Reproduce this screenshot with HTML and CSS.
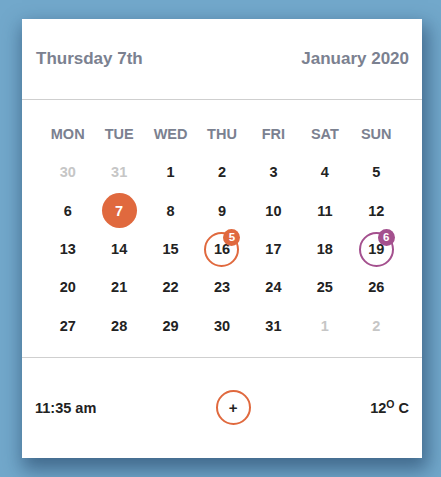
FILE: index.html
```html
<!DOCTYPE html>
<html>
<head>
<meta charset="utf-8">
<link rel="stylesheet" href="styles.css">
</head>
<body>
<div class="card">
  <header class="head">
    <span>Thursday 7th</span>
    <span>January 2020</span>
  </header>
  <section class="cal">
    <div class="wd">MON</div><div class="wd">TUE</div><div class="wd">WED</div><div class="wd">THU</div><div class="wd">FRI</div><div class="wd">SAT</div><div class="wd">SUN</div>
    <div class="d muted">30</div><div class="d muted">31</div><div class="d">1</div><div class="d">2</div><div class="d">3</div><div class="d">4</div><div class="d">5</div>
    <div class="d">6</div><div class="d"><span class="ring today">7</span></div><div class="d">8</div><div class="d">9</div><div class="d">10</div><div class="d">11</div><div class="d">12</div>
    <div class="d">13</div><div class="d">14</div><div class="d">15</div><div class="d"><span class="ring ev-orange">16<b class="badge">5</b></span></div><div class="d">17</div><div class="d">18</div><div class="d"><span class="ring ev-purple">19<b class="badge">6</b></span></div>
    <div class="d">20</div><div class="d">21</div><div class="d">22</div><div class="d">23</div><div class="d">24</div><div class="d">25</div><div class="d">26</div>
    <div class="d">27</div><div class="d">28</div><div class="d">29</div><div class="d">30</div><div class="d">31</div><div class="d muted">1</div><div class="d muted">2</div>
  </section>
  <footer class="foot">
    <span>11:35 am</span>
    <span class="add">+</span>
    <span>12<sup class="deg">O</sup> C</span>
  </footer>
</div>
</body>
</html>
```

FILE: styles.css
```css
html, body {
  margin: 0;
  padding: 0;
}
body {
  width: 441px;
  height: 477px;
  background: #72a8cb;
  font-family: "Liberation Sans", Arial, sans-serif;
  padding: 19px 0 0 22px;
  box-sizing: border-box;
  overflow: hidden;
}
.card {
  width: 400px;
  height: 439px;
  background: #fff;
  box-shadow: 3px 9px 18px 3px rgba(25, 55, 90, 0.55);
  display: flex;
  flex-direction: column;
}
.head {
  height: 80px;
  border-bottom: 1px solid #cfcfcf;
  display: flex;
  align-items: center;
  justify-content: space-between;
  padding: 0 13px 0 14px;
  font-size: 17px;
  font-weight: bold;
  color: #7b8190;
}
.cal {
  padding: 15px 20px 12px;
  display: grid;
  grid-template-columns: repeat(7, 1fr);
  grid-auto-rows: 38.33px;
  border-bottom: 1px solid #cfcfcf;
}
.wd {
  display: flex;
  align-items: center;
  justify-content: center;
  font-size: 14.5px;
  font-weight: bold;
  color: #7b8190;
}
.d {
  display: flex;
  align-items: center;
  justify-content: center;
  font-size: 14.5px;
  font-weight: bold;
  color: #222;
}
.d.muted {
  color: #c6c6c6;
}
.ring {
  position: relative;
  width: 35px;
  height: 35px;
  box-sizing: border-box;
  border-radius: 50%;
  display: flex;
  align-items: center;
  justify-content: center;
}
.today {
  background: #e0693e;
  color: #fff;
}
.ev-orange {
  border: 2px solid #e0693e;
}
.ev-purple {
  border: 2px solid #a4508e;
}
.badge {
  position: absolute;
  top: -5px;
  right: -3px;
  width: 17px;
  height: 17px;
  border-radius: 50%;
  color: #fff;
  font-size: 11.5px;
  display: flex;
  align-items: center;
  justify-content: center;
}
.ev-orange .badge {
  background: #e0693e;
}
.ev-purple .badge {
  background: #a4508e;
}
.foot {
  flex: 1;
  display: flex;
  align-items: center;
  justify-content: space-between;
  padding: 0 13px;
  font-size: 14.5px;
  font-weight: bold;
  color: #222;
}
.add {
  width: 35px;
  height: 35px;
  box-sizing: border-box;
  border: 2px solid #e0693e;
  border-radius: 50%;
  display: flex;
  align-items: center;
  justify-content: center;
  font-size: 15px;
}
.deg {
  font-size: 10.5px;
  line-height: 0;
  vertical-align: 5px;
}
```
